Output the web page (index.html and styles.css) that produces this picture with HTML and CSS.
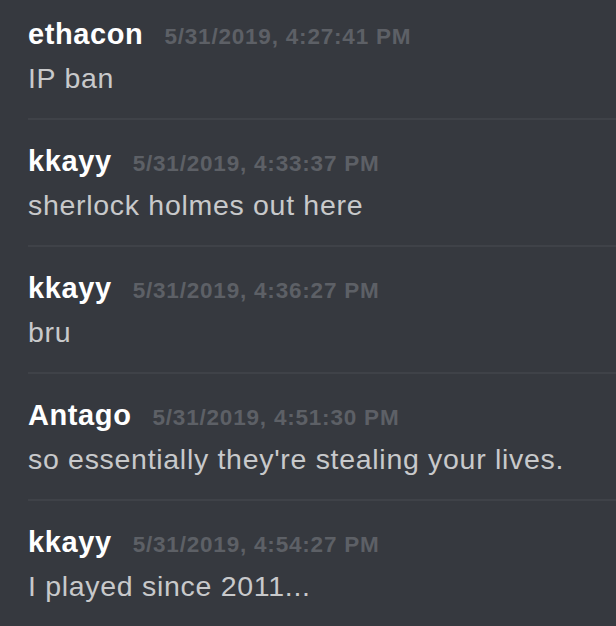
FILE: index.html
```html
<!DOCTYPE html>
<html lang="en">
<head>
    <meta charset="UTF-8">
    <meta name="viewport" content="width=device-width, initial-scale=1.0">
    <title>Chat</title>
    <link rel="stylesheet" href="styles.css">
</head>
<body>
    <div class="messages">
        <div class="message">
            <div class="meta">
                <span class="author">ethacon</span>
                <span class="time">5/31/2019, 4:27:41 PM</span>
            </div>
            <div class="content">IP ban</div>
        </div>

        <div class="message">
            <div class="meta">
                <span class="author">kkayy</span>
                <span class="time">5/31/2019, 4:33:37 PM</span>
            </div>
            <div class="content">sherlock holmes out here</div>
        </div>

        <div class="message">
            <div class="meta">
                <span class="author">kkayy</span>
                <span class="time">5/31/2019, 4:36:27 PM</span>
            </div>
            <div class="content">bru</div>
        </div>

        <div class="message">
            <div class="meta">
                <span class="author">Antago</span>
                <span class="time">5/31/2019, 4:51:30 PM</span>
            </div>
            <div class="content">so essentially they're stealing your lives.</div>
        </div>

        <div class="message">
            <div class="meta">
                <span class="author">kkayy</span>
                <span class="time">5/31/2019, 4:54:27 PM</span>
            </div>
            <div class="content">I played since 2011...</div>
        </div>
    </div>
</body>
</html>
```

FILE: styles.css
```css
* {
    margin: 0;
    padding: 0;
    box-sizing: border-box;
}

body {
    font-family: 'Liberation Sans', Arial, sans-serif;
    background: #36393f;
    height: 100vh;
    overflow: hidden;
}

.messages {
    padding-left: 28px;
}

.message {
    padding: 23px 0 20px;
    border-bottom: 2px solid #3f4248;
}

.message:first-child {
    padding-top: 16px;
}

.meta {
    display: flex;
    align-items: baseline;
    gap: 21px;
    height: 36px;
    line-height: 36px;
}

.author {
    color: #ffffff;
    font-size: 29px;
    font-weight: bold;
    letter-spacing: 0.6px;
}

.time {
    color: #5d6066;
    font-size: 22.5px;
    font-weight: bold;
    letter-spacing: 0.8px;
}

.content {
    margin-top: 6px;
    color: #c8c9cb;
    font-size: 28.5px;
    line-height: 40px;
    letter-spacing: 0.7px;
}
```
